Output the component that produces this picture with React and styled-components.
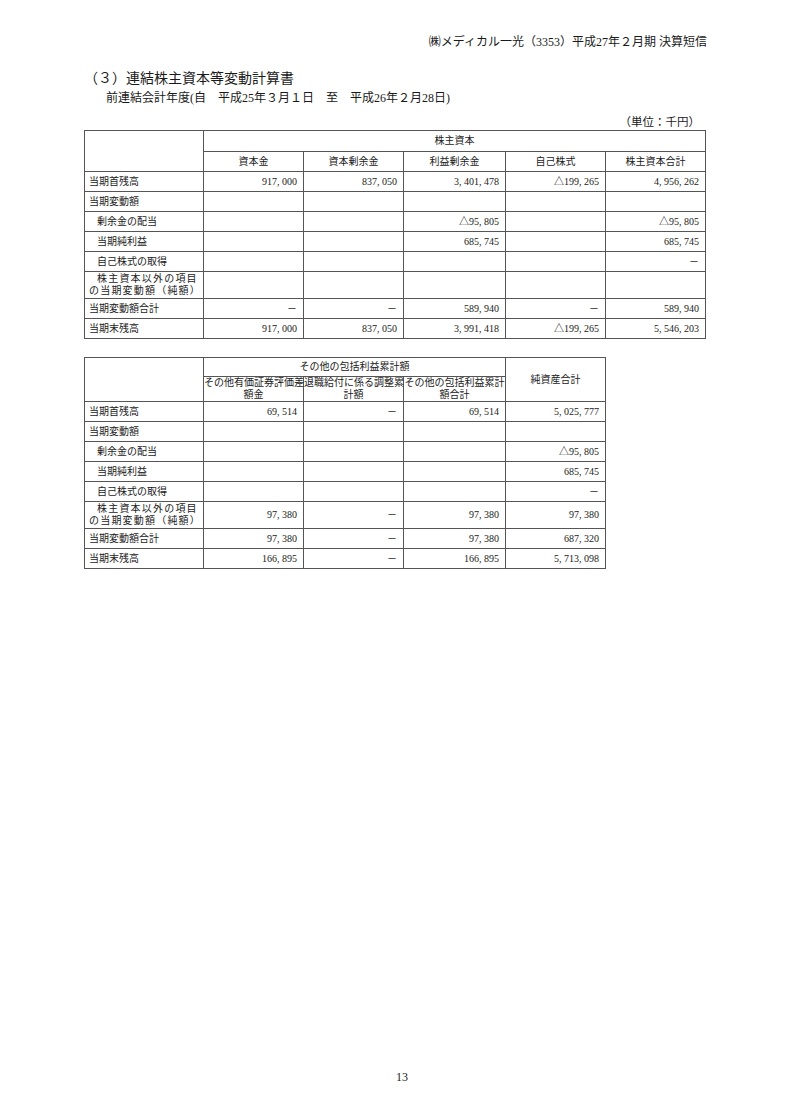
import styled, { createGlobalStyle } from 'styled-components';

const GlobalStyle = createGlobalStyle`
    html, body {
        margin: 0;
        padding: 0;
        background: #ffffff;
    }
    body {
        font-family: "Liberation Serif", "Noto Sans CJK JP", serif;
        color: #1a1a1a;
    }
`;

const Page = styled.div`
    width: 790px;
    height: 1118px;
    display: flex;
    flex-direction: column;
    box-sizing: border-box;
    padding: 34px 84px 0 84px;
`;

const RunningHead = styled.div`
    text-align: right;
    font-size: 12px;
    line-height: 16px;
    margin-right: -1px;
`;

const Title = styled.h2`
    margin: 20px 0 0 0;
    font-size: 14px;
    font-weight: 400;
    line-height: 18px;
`;

const Period = styled.div`
    margin: 2px 0 0 22px;
    font-size: 12px;
    line-height: 16px;
`;

const Unit = styled.div`
    text-align: right;
    font-size: 11.5px;
    line-height: 14px;
    margin: 9px 6px 1px 0;
`;

const Table = styled.table`
    border-collapse: collapse;
    table-layout: fixed;
    width: ${(p) => p.$width}px;
    font-size: 10px;
    margin-top: ${(p) => p.$gap || 0}px;
`;

const Cell = styled.td`
    border: 1px solid #555;
    height: ${(p) => p.$h || 19}px;
    padding: 0 ${(p) => (p.$num ? 6 : 4)}px 0 ${(p) => (p.$indent ? 12 : 4)}px;
    text-align: ${(p) => (p.$num ? 'right' : 'left')};
    line-height: 12px;
    white-space: nowrap;
    overflow: visible;
    vertical-align: middle;
`;

const HeadCell = styled.th`
    border: 1px solid #555;
    height: ${(p) => p.$h || 19}px;
    padding: 0;
    font-weight: 400;
    text-align: center;
    line-height: 12px;
    white-space: nowrap;
    overflow: visible;
    vertical-align: middle;
`;

const TwoLine = styled.span`
    display: block;
    letter-spacing: 1.2px;
    padding-left: ${(p) => p.$shift || 0}px;
`;

const Footer = styled.div`
    margin-top: auto;
    text-align: center;
    font-size: 12px;
    line-height: 14px;
    padding: 0 0 34px 14px;
    margin-left: -84px;
    margin-right: -84px;
`;

const rows1 = [
    { label: '当期首残高', v: ['917, 000', '837, 050', '3, 401, 478', '△199, 265', '4, 956, 262'] },
    { label: '当期変動額', v: ['', '', '', '', ''] },
    { label: '剰余金の配当', indent: true, v: ['', '', '△95, 805', '', '△95, 805'] },
    { label: '当期純利益', indent: true, v: ['', '', '685, 745', '', '685, 745'] },
    { label: '自己株式の取得', indent: true, v: ['', '', '', '', '－'] },
    { label: 'other', v: ['', '', '', '', ''] },
    { label: '当期変動額合計', v: ['－', '－', '589, 940', '－', '589, 940'] },
    { label: '当期末残高', v: ['917, 000', '837, 050', '3, 991, 418', '△199, 265', '5, 546, 203'] },
];

const rows2 = [
    { label: '当期首残高', v: ['69, 514', '－', '69, 514', '5, 025, 777'] },
    { label: '当期変動額', v: ['', '', '', ''] },
    { label: '剰余金の配当', indent: true, v: ['', '', '', '△95, 805'] },
    { label: '当期純利益', indent: true, v: ['', '', '', '685, 745'] },
    { label: '自己株式の取得', indent: true, v: ['', '', '', '－'] },
    { label: 'other', v: ['97, 380', '－', '97, 380', '97, 380'] },
    { label: '当期変動額合計', v: ['97, 380', '－', '97, 380', '687, 320'] },
    { label: '当期末残高', v: ['166, 895', '－', '166, 895', '5, 713, 098'] },
];

function LabelCell({ row }) {
    if (row.label === 'other') {
        return (
            <Cell $h={26}>
                <TwoLine $shift={8}>株主資本以外の項目</TwoLine>
                <TwoLine>の当期変動額（純額）</TwoLine>
            </Cell>
        );
    }
    return <Cell $indent={row.indent}>{row.label}</Cell>;
}

function DataRows({ rows }) {
    return rows.map((row, i) => (
        <tr key={i}>
            <LabelCell row={row} />
            {row.v.map((val, j) => (
                <Cell key={j} $num $h={row.label === 'other' ? 26 : 19}>
                    {val}
                </Cell>
            ))}
        </tr>
    ));
}

export default function App() {
    return (
        <>
            <GlobalStyle />
            <Page>
                <RunningHead>㈱メディカル一光（3353）平成27年２月期 決算短信</RunningHead>
                <Title>（３）連結株主資本等変動計算書</Title>
                <Period>前連結会計年度(自　平成25年３月１日　至　平成26年２月28日)</Period>
                <Unit>（単位：千円）</Unit>

                <Table $width={621}>
                    <colgroup>
                        <col style={{ width: 119 }} />
                        <col style={{ width: 100 }} />
                        <col style={{ width: 100 }} />
                        <col style={{ width: 102 }} />
                        <col style={{ width: 100 }} />
                        <col style={{ width: 100 }} />
                    </colgroup>
                    <thead>
                        <tr>
                            <HeadCell rowSpan={2} />
                            <HeadCell colSpan={5} $h={20}>株主資本</HeadCell>
                        </tr>
                        <tr>
                            <HeadCell>資本金</HeadCell>
                            <HeadCell>資本剰余金</HeadCell>
                            <HeadCell>利益剰余金</HeadCell>
                            <HeadCell>自己株式</HeadCell>
                            <HeadCell>株主資本合計</HeadCell>
                        </tr>
                    </thead>
                    <tbody>
                        <DataRows rows={rows1} />
                    </tbody>
                </Table>

                <Table $width={521} $gap={18}>
                    <colgroup>
                        <col style={{ width: 119 }} />
                        <col style={{ width: 100 }} />
                        <col style={{ width: 100 }} />
                        <col style={{ width: 102 }} />
                        <col style={{ width: 100 }} />
                    </colgroup>
                    <thead>
                        <tr>
                            <HeadCell rowSpan={2} />
                            <HeadCell colSpan={3} $h={18}>その他の包括利益累計額</HeadCell>
                            <HeadCell rowSpan={2}>純資産合計</HeadCell>
                        </tr>
                        <tr>
                            <HeadCell $h={24}>
                                その他有価証券評価差
                                <br />
                                額金
                            </HeadCell>
                            <HeadCell $h={24}>
                                退職給付に係る調整累
                                <br />
                                計額
                            </HeadCell>
                            <HeadCell $h={24}>
                                その他の包括利益累計
                                <br />
                                額合計
                            </HeadCell>
                        </tr>
                    </thead>
                    <tbody>
                        <DataRows rows={rows2} />
                    </tbody>
                </Table>

                <Footer>13</Footer>
            </Page>
        </>
    );
}
